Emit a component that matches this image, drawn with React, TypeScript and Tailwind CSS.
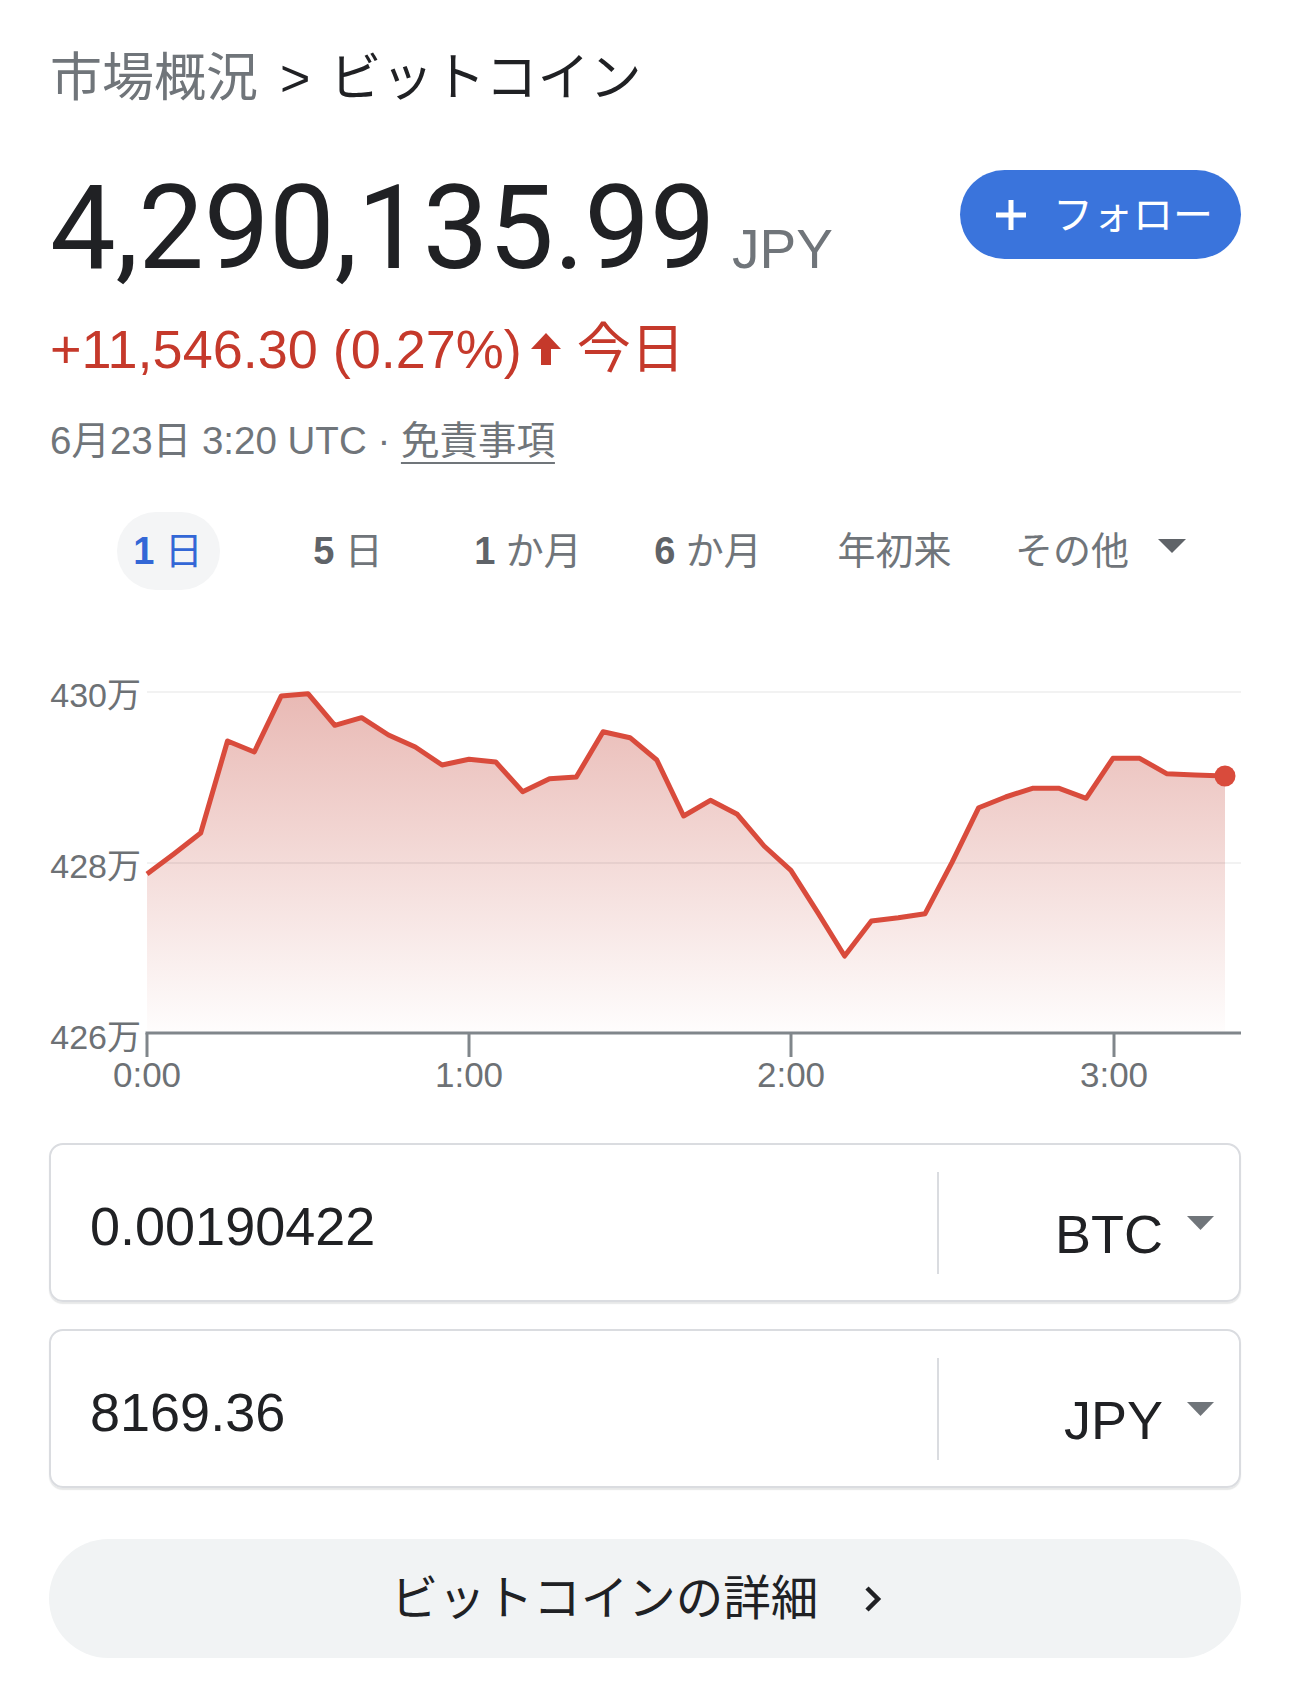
import React from "react";

const PTS: [number, number][] = [
  [147, 873], [173.8, 853], [200.7, 832], [227.5, 740], [254.3, 751], [281.2, 695],
  [308, 692.7], [334.8, 724.3], [361.6, 716.7], [388.5, 734], [415.3, 746], [442.1, 764],
  [469, 758.3], [495.8, 761], [522.6, 790.7], [549.5, 777.7], [576.3, 776], [603.1, 730.7],
  [630, 736.7], [656.8, 759], [683.6, 815], [710.4, 799.3], [737.3, 813.3], [764.1, 845],
  [790.9, 869.3], [817.8, 911.7], [844.6, 955], [871.4, 920], [898.3, 916.7], [925.1, 912.7],
  [951.9, 861.7], [978.7, 806.7], [1005.6, 796], [1032.4, 787.3], [1059.2, 787.3], [1086.1, 797.3],
  [1112.9, 757.3], [1139.7, 757.3], [1166.6, 772.7], [1195, 774], [1225, 775],
];

const SANS = "font-['Liberation_Sans','Noto_Sans_CJK_JP',sans-serif]";

function Chart() {
  const top = 640;
  const p = PTS.map(([x, y]) => [x, y - top]);
  const line = p.map(([x, y]) => `${x},${y}`).join(" ");
  const last = p[p.length - 1];
  const area =
    `M${p[0][0]},392 ` + p.map(([x, y]) => `L${x},${y}`).join(" ") + ` L${last[0]},392 Z`;
  const ticks = [
    { x: 147, t: "0:00" },
    { x: 469, t: "1:00" },
    { x: 791, t: "2:00" },
    { x: 1114, t: "3:00" },
  ];
  return (
    <svg width="1290" height="460" viewBox="0 0 1290 460" className={`block ${SANS}`}>
      <defs>
        <linearGradient id="fillg" x1="0" y1="45" x2="0" y2="392" gradientUnits="userSpaceOnUse">
          <stop offset="0" stopColor="#c0392b" stopOpacity="0.36" />
          <stop offset="1" stopColor="#c0392b" stopOpacity="0.01" />
        </linearGradient>
      </defs>
      <path d={area} fill="url(#fillg)" />
      <line x1="147" y1="51" x2="1241" y2="51" stroke="#000" strokeOpacity="0.05" strokeWidth="2" />
      <line x1="147" y1="222" x2="1241" y2="222" stroke="#000" strokeOpacity="0.05" strokeWidth="2" />
      <polyline points={line} fill="none" stroke="#d94b3c" strokeWidth="5" strokeLinejoin="round" />
      <circle cx={last[0]} cy={last[1]} r="10.5" fill="#d94b3c" />
      <line x1="145.5" y1="392" x2="1241" y2="392" stroke="#80868b" strokeWidth="3" />
      {ticks.map((k) => (
        <line key={k.t} x1={k.x} y1="392" x2={k.x} y2="416" stroke="#80868b" strokeWidth="3" />
      ))}
      {ticks.map((k) => (
        <text key={"l" + k.t} x={k.x} y="433" textAnchor="middle" dominantBaseline="central" fontSize="35" fill="#6d7175">
          {k.t}
        </text>
      ))}
      <text x="141" y="54" textAnchor="end" dominantBaseline="central" fontSize="34" fill="#6d7175">430万</text>
      <text x="141" y="225" textAnchor="end" dominantBaseline="central" fontSize="34" fill="#6d7175">428万</text>
      <text x="141" y="396" textAnchor="end" dominantBaseline="central" fontSize="34" fill="#6d7175">426万</text>
    </svg>
  );
}

function Caret({ className }: { className?: string }) {
  return (
    <svg width="27" height="14" viewBox="0 0 27 14" className={className}>
      <path d="M0 0 H27 L13.5 14 Z" fill="currentColor" />
    </svg>
  );
}

function ConvBox({ value, unit }: { value: string; unit: string }) {
  return (
    <div className="h-[159px] rounded-[14px] border-2 border-[#dadce0] shadow-[0_2px_1px_rgba(60,64,67,0.12)] flex items-center">
      <div className="w-[886px] pl-[39px] pt-[6px] text-[54px] text-[#202124] leading-none">{value}</div>
      <div className="w-[2px] h-[102px] bg-[#dadce0]" />
      <div className="flex-1 flex items-center justify-end pr-[25px]">
        <span className="text-[54px] leading-none text-[#202124] pt-[22px]">{unit}</span>
        <Caret className="ml-[24px] shrink-0 text-[#70757a]" />
      </div>
    </div>
  );
}

export default function App() {
  return (
    <div className={`w-[1290px] h-[1704px] bg-white overflow-hidden ${SANS}`}>
      {/* breadcrumb */}
      <div className="px-[50px] pt-[47px]">
        <div className="h-[62px] flex items-center text-[52px] leading-none whitespace-nowrap">
          <span className="text-[#70757a]">市場概況</span>
          <span className="ml-[22px] mr-[19px] text-[#202124]">&gt;</span>
          <span className="text-[#202124]">ビットコイン</span>
        </div>
      </div>

      {/* price row */}
      <div className="px-[49px] mt-[61px] flex items-start justify-between">
        <div className="flex items-baseline pl-[1px]">
          <span className="font-['Roboto',sans-serif] text-[117px] leading-none tracking-[-0.3px] text-[#202124]">
            4,290,135.99
          </span>
          <span className="ml-[17px] text-[55px] leading-none text-[#70757a]">JPY</span>
        </div>
        <button className="w-[281px] h-[89px] rounded-full bg-[#3a74dc] text-white flex items-center pl-[35px]">
          <svg width="32" height="32" viewBox="0 0 32 32" className="shrink-0">
            <path d="M16 1 V31 M1 16 H31" stroke="white" strokeWidth="5" />
          </svg>
          <span className="ml-[26px] text-[40px] leading-none">フォロー</span>
        </button>
      </div>

      {/* change */}
      <div className="px-[50px] mt-[30px] h-[64px] flex items-center text-[#c5392b] whitespace-nowrap">
        <span className="text-[54px] leading-none">+11,546.30 (0.27%)</span>
        <svg width="34" height="36" viewBox="0 0 34 36" className="ml-[7px] shrink-0">
          <path d="M17 2 L32 18 H22 V34 H12 V18 H2 Z" fill="currentColor" />
        </svg>
        <span className="ml-[14px] text-[54px] leading-none">今日</span>
      </div>

      {/* date */}
      <div className="px-[50px] mt-[35px] h-[50px] flex items-center text-[38.5px] leading-none text-[#70757a] whitespace-nowrap">
        <span className="whitespace-pre">6月23日 3:20 UTC · </span>
        <span className="underline decoration-[2px] underline-offset-[8px]">免責事項</span>
      </div>

      {/* tabs */}
      <div className="mt-[46px] ml-[78px] w-[1080px] grid grid-cols-6 h-[78px] text-[38px] leading-none">
        <div className="flex items-center justify-center">
          <div className="w-[103px] h-[78px] rounded-full bg-[#f4f5f6] flex items-center justify-center text-[#3367d6]">
            <span className="font-bold">1</span>
            <span className="whitespace-pre"> 日</span>
          </div>
        </div>
        <div className="flex items-center justify-center text-[#70757a]">
          <span className="font-bold text-[#5f6368]">5</span>
          <span className="whitespace-pre"> 日</span>
        </div>
        <div className="flex items-center justify-center text-[#70757a]">
          <span className="font-bold text-[#5f6368]">1</span>
          <span className="whitespace-pre"> か月</span>
        </div>
        <div className="flex items-center justify-center text-[#70757a]">
          <span className="font-bold text-[#5f6368]">6</span>
          <span className="whitespace-pre"> か月</span>
        </div>
        <div className="flex items-center justify-center pl-[13px] text-[#70757a]">年初来</div>
        <div className="flex items-center justify-start pl-[37px] text-[#70757a] whitespace-nowrap">
          <span>その他</span>
          <svg width="28" height="14" viewBox="0 0 28 14" className="ml-[29px] -mt-[10px] shrink-0 text-[#5f6368]">
            <path d="M0 0 H28 L14 14 Z" fill="currentColor" />
          </svg>
        </div>
      </div>

      {/* chart */}
      <div className="mt-[51px]">
        <Chart />
      </div>

      {/* converters */}
      <div className="px-[49px] mt-[42px]">
        <ConvBox value="0.00190422" unit="BTC" />
        <div className="h-[27px]" />
        <ConvBox value="8169.36" unit="JPY" />
      </div>

      {/* details button */}
      <div className="px-[49px] mt-[51px]">
        <div className="h-[119px] rounded-full bg-[#f1f3f4] flex items-center justify-center pr-[16px]">
          <span className="text-[47.5px] leading-none text-[#202124]">ビットコインの詳細</span>
          <svg width="20" height="28" viewBox="0 0 20 28" className="ml-[45px] shrink-0">
            <path d="M4 3 L15 14 L4 25" fill="none" stroke="#202124" strokeWidth="4.5" />
          </svg>
        </div>
      </div>
    </div>
  );
}
